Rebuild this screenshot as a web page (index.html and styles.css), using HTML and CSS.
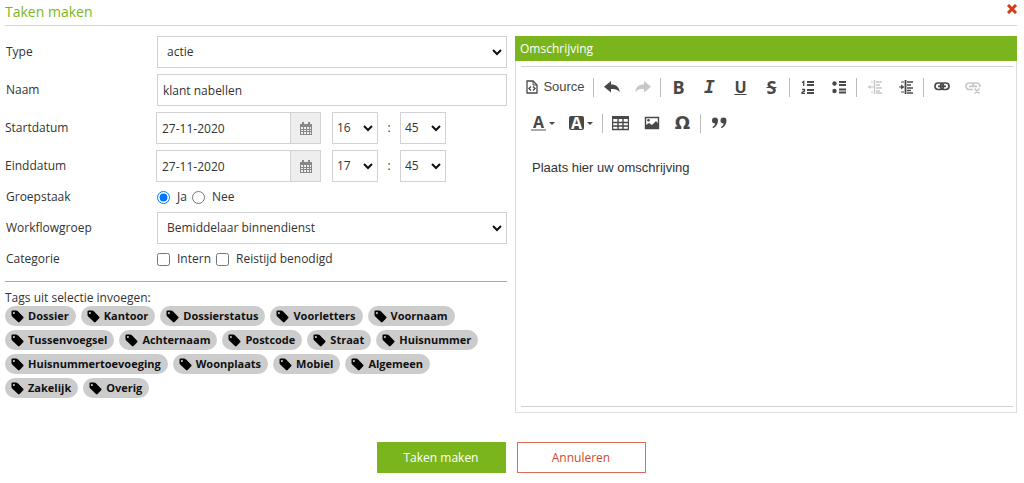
FILE: index.html
```html
<!DOCTYPE html>
<html lang="nl">
  <head>
    <meta charset="UTF-8">
    <meta
      name="viewport"
      content="width=device-width, initial-scale=1.0"
    >
    <title>Taken maken</title>

    <link rel="stylesheet" href="styles.css">
  </head>
<body>
  <header>
    <h1>Taken maken</h1>
    <button type="button" class="close" aria-label="Sluiten">
      <svg width="10" height="10" viewBox="0 0 10 10"><path d="M2 2L8 8M8 2L2 8" stroke="#d23c14" stroke-width="3" stroke-linecap="square"/></svg>
    </button>
  </header>

  <form action="#" method="post">
    <div class="columns">
      <section class="fields">
        <div class="row">
          <label for="type">Type</label>
          <select id="type" class="wide"><option>actie</option></select>
        </div>
        <div class="row">
          <label for="naam">Naam</label>
          <input id="naam" class="wide" type="text" value="klant nabellen">
        </div>
        <div class="row date-row">
          <label for="start">Startdatum</label>
          <div class="moment">
            <input id="start" class="date" type="text" value="27-11-2020">
            <button type="button" class="calendar" aria-label="Kies startdatum">
              <svg width="12" height="13" viewBox="0 0 12 13"><path d="M0 2h12v11H0z" fill="#888"/><path d="M1 5h2v2H1zM4 5h2v2H4zM7 5h2v2H7zM10 5h1v2h-1zM1 8h2v1H1zM4 8h2v1H4zM7 8h2v1H7zM10 8h1v1h-1zM1 10h2v2H1zM4 10h2v2H4zM7 10h2v2H7zM10 10h1v2h-1z" fill="#eee"/><path d="M3 0v4M9 0v4" stroke="#888" stroke-width="2"/></svg>
            </button>
            <select class="time" aria-label="Startuur"><option>16</option></select>
            <span class="colon">:</span>
            <select class="time" aria-label="Startminuut"><option>45</option></select>
          </div>
        </div>
        <div class="row date-row">
          <label for="eind">Einddatum</label>
          <div class="moment">
            <input id="eind" class="date" type="text" value="27-11-2020">
            <button type="button" class="calendar" aria-label="Kies einddatum">
              <svg width="12" height="13" viewBox="0 0 12 13"><path d="M0 2h12v11H0z" fill="#888"/><path d="M1 5h2v2H1zM4 5h2v2H4zM7 5h2v2H7zM10 5h1v2h-1zM1 8h2v1H1zM4 8h2v1H4zM7 8h2v1H7zM10 8h1v1h-1zM1 10h2v2H1zM4 10h2v2H4zM7 10h2v2H7zM10 10h1v2h-1z" fill="#eee"/><path d="M3 0v4M9 0v4" stroke="#888" stroke-width="2"/></svg>
            </button>
            <select class="time" aria-label="Einduur"><option>17</option></select>
            <span class="colon">:</span>
            <select class="time" aria-label="Eindminuut"><option>45</option></select>
          </div>
        </div>
        <div class="row choice-row" role="radiogroup" aria-labelledby="groepstaak">
          <span id="groepstaak">Groepstaak</span>
          <div class="choices">
            <label><input type="radio" name="groepstaak" checked>Ja</label>
            <label><input type="radio" name="groepstaak">Nee</label>
          </div>
        </div>
        <div class="row">
          <label for="workflow">Workflowgroep</label>
          <select id="workflow" class="wide"><option>Bemiddelaar binnendienst</option></select>
        </div>
        <div class="row choice-row" role="group" aria-labelledby="categorie">
          <span id="categorie">Categorie</span>
          <div class="choices">
            <label><input type="checkbox" name="intern">Intern</label>
            <label><input type="checkbox" name="reistijd">Reistijd benodigd</label>
          </div>
        </div>

        <hr>

        <p>Tags uit selectie invoegen:</p>
        <div class="tags">
          <button type="button"><svg><use href="#tag"/></svg>Dossier</button>
          <button type="button"><svg><use href="#tag"/></svg>Kantoor</button>
          <button type="button"><svg><use href="#tag"/></svg>Dossierstatus</button>
          <button type="button"><svg><use href="#tag"/></svg>Voorletters</button>
          <button type="button"><svg><use href="#tag"/></svg>Voornaam</button>
          <button type="button"><svg><use href="#tag"/></svg>Tussenvoegsel</button>
          <button type="button"><svg><use href="#tag"/></svg>Achternaam</button>
          <button type="button"><svg><use href="#tag"/></svg>Postcode</button>
          <button type="button"><svg><use href="#tag"/></svg>Straat</button>
          <button type="button"><svg><use href="#tag"/></svg>Huisnummer</button>
          <button type="button"><svg><use href="#tag"/></svg>Huisnummertoevoeging</button>
          <button type="button"><svg><use href="#tag"/></svg>Woonplaats</button>
          <button type="button"><svg><use href="#tag"/></svg>Mobiel</button>
          <button type="button"><svg><use href="#tag"/></svg>Algemeen</button>
          <button type="button"><svg><use href="#tag"/></svg>Zakelijk</button>
          <button type="button"><svg><use href="#tag"/></svg>Overig</button>
        </div>
      </section>

      <section class="panel">
        <h2><label for="omschrijving">Omschrijving</label></h2>
        <div class="editor">
          <div class="toolbar">
            <div class="tools">
              <button type="button" class="source">
                <svg width="12" height="14" viewBox="0 0 12 14" fill="none" stroke="#484848"><path d="M1 1h6l4 4v8H1z" stroke-width="1.3"/><path d="M7 1v4h4" stroke-width="1"/><path d="M5 6.500L3 8.500l2 2M7 6.500l2 2-2 2" stroke-width="1.400"/></svg>
                Source
              </button>
              <i class="separator"></i>
              <button type="button" aria-label="Undo"><svg width="16" height="16" viewBox="0 0 16 16"><path d="M7 2v3.500c5.500 0 8 2.500 8.800 7.500C13.500 10.500 11 10 7 10v3.500L0 7.700z" fill="#484848"/></svg></button>
              <button type="button" aria-label="Redo" disabled><svg width="16" height="16" viewBox="0 0 16 16"><path d="M9 2v3.500C3.500 5.500 1 8 .2 13 2.500 10.500 5 10 9 10v3.500l7-5.800z" fill="#484848"/></svg></button>
              <i class="separator"></i>
              <button type="button" class="bold">B</button>
              <button type="button" class="italic">I</button>
              <button type="button" class="underline">U</button>
              <button type="button" class="strike">S</button>
              <i class="separator"></i>
              <button type="button" aria-label="Numbered list"><svg width="16" height="16" viewBox="0 0 16 16" fill="none" stroke="#484848"><path d="M7 3h7M7 6h7M7 11h7M7 14h7" stroke-width="1.800"/><path d="M2 3.500L3.700 2.500V7M2 10.500h2.500v1.700L2 13.500V14.300h3" stroke-width="1.300"/></svg></button>
              <button type="button" aria-label="Bulleted list"><svg width="16" height="16" viewBox="0 0 16 16"><circle cx="3.500" cy="4.500" r="2.200" fill="#484848"/><circle cx="3.500" cy="12" r="2.200" fill="#484848"/><path d="M8 3h7M8 6h7M8 10.500h7M8 13.500h7" stroke="#484848" stroke-width="1.800"/></svg></button>
              <i class="separator"></i>
              <button type="button" aria-label="Decrease indent" disabled><svg width="16" height="16" viewBox="0 0 16 16" stroke="#484848"><path d="M7.500 1v14" stroke-width="1.500"/><path d="M9 3h6M9 6h4M9 9h6M9 12h4M9 14h6" stroke-width="1.300"/><path d="M3 8h4M4 3h2M4 13h2"/><path d="M0.500 8L3.500 6v4z" fill="#484848" stroke="none"/></svg></button>
              <button type="button" aria-label="Increase indent"><svg width="16" height="16" viewBox="0 0 16 16" stroke="#484848"><path d="M7.500 1v14" stroke-width="1.800"/><path d="M9 3h6M9 6h4M9 9h6M9 11.500h4M9 14h6" stroke-width="1.500"/><path d="M1 8h4M3 3h3M3 13h3"/><path d="M6.500 8L3 5.500v5z" fill="#484848" stroke="none"/></svg></button>
              <i class="separator"></i>
              <button type="button" aria-label="Link"><svg width="16" height="16" viewBox="0 0 16 16" fill="none" stroke="#484848"><rect x="1" y="4" width="8.500" height="6.500" rx="3.200" stroke-width="1.700"/><rect x="6.500" y="4" width="8.500" height="6.500" rx="3.200" stroke-width="1.700"/><path d="M4 7.300h8" stroke-width="1.700"/></svg></button>
              <button type="button" aria-label="Unlink" disabled><svg width="16" height="16" viewBox="0 0 16 16" fill="none" stroke="#484848" stroke-width="1.700"><path d="M8 10.500H4.200a3.200 3.200 0 0 1 0-6.500h7.600a3.200 3.200 0 0 1 3 4M8 4.500v3M4 7.300h8M9.500 9.500l5 5M14.500 9.500l-5 5"/></svg></button>
            </div>
            <div class="tools">
              <button type="button" class="color" aria-label="Text color"><span class="ink">A</span><i class="arrow"></i></button>
              <button type="button" class="color" aria-label="Background color"><span class="fill">A</span><i class="arrow"></i></button>
              <i class="separator"></i>
              <button type="button" aria-label="Table"><svg width="17" height="16" viewBox="0 0 17 16"><path d="M0 1h17v3H0z" fill="#484848"/><path d="M.5 4v10.500h16V4M.5 7.500h16M.5 11h16M6 4v10.500M11 4v10.500" fill="none" stroke="#484848" stroke-width="1.400"/></svg></button>
              <button type="button" aria-label="Image"><svg width="16" height="16" viewBox="0 0 16 16"><path d="M1.500 2.500h13v11h-13z" fill="none" stroke="#484848" stroke-width="1.400"/><path d="M2 13v-3l3-2 3 2 4-4 2.500 3v4z" fill="#484848"/><circle cx="4.500" cy="5.300" r="1.300" fill="#484848"/></svg></button>
              <button type="button" class="omega">Ω</button>
              <i class="separator"></i>
              <button type="button" aria-label="Block quote"><svg width="16" height="16" viewBox="0 0 16 16"><path d="M1 5.500a3 3 0 1 1 6 0C7 9 5 12 2 13.200L1.500 12C3 11 4 10 4.200 8.500A3 3 0 0 1 1 5.500zM9.500 5.500a3 3 0 1 1 6 0c0 3.500-2 6.500-5 7.700L10 12c1.500-1 2.500-2 2.700-3.500a3 3 0 0 1-3.200-3z" fill="#484848"/></svg></button>
            </div>
          </div>
          <textarea id="omschrijving">Plaats hier uw omschrijving</textarea>
        </div>
      </section>
    </div>

    <div class="actions">
      <button type="submit" class="submit">Taken maken</button>
      <button type="button" class="cancel">Annuleren</button>
    </div>
  </form>

  <svg class="symbols">
    <symbol id="tag" viewBox="0 0 13 13">
      <path fill-rule="evenodd" d="M1.500.5H5.200Q6 .5 6.600 1.100L12.200 6.700Q13 7.500 12.200 8.300L8.600 12.100Q7.800 12.900 7 12.100L1.200 6.400Q.5 5.700.5 5V1.500Q.5.500 1.500.500zM2.900 1.900a1 1 0 1 0 .01 0z"/>
    </symbol>
  </svg>
</body>
</html>
```
FILE: styles.css
```css
* {
  box-sizing: border-box;
}
body {
  margin: 0;
  padding: 0 7px 0 5px;
  background-color: #fff;
  color: #333;
  font: 12px/16px "Open Sans", sans-serif;
}
header {
  display: flex;
  justify-content: space-between;
  align-items: flex-start;
  height: 26px;
  border-bottom: 1px solid #d6d6d6;
}
h1 {
  margin: 2px 0 0;
  color: #7ab51d;
  font-size: 14px;
  font-weight: 400;
  line-height: 20px;
}
button,
input,
select,
textarea {
  margin: 0;
  color: inherit;
  font: inherit;
}
button {
  padding: 0;
  border: 0;
  background: none;
}
svg {
  display: block;
}
.symbols {
  display: none;
}
.close {
  margin-top: 4px;
}
.columns {
  display: grid;
  grid-template-columns: 1fr 1fr;
  gap: 8px;
  padding-top: 10px;
}
.fields {
  display: flex;
  flex-direction: column;
  gap: 6px;
}
.row {
  display: grid;
  grid-template-columns: 151px 1fr;
  align-items: center;
  min-height: 32px;
  padding-left: 1px;
}
.date-row {
  padding-left: 0;
}
.choice-row {
  min-height: 18px;
}
.wide,
.date,
.time {
  height: 32px;
  border: 1px solid #d2d2d2;
  border-radius: 0;
  background-color: #fff;
}
.wide {
  width: 100%;
  padding: 0 5px;
}
select {
  appearance: none;
  background-image: url("data:image/svg+xml,%3Csvg xmlns='http://www.w3.org/2000/svg' width='10' height='7'%3E%3Cpath d='M1 1l4 4 4-4' fill='none' stroke='%23111' stroke-width='2'/%3E%3C/svg%3E");
  background-position: right 4px center;
  background-repeat: no-repeat;
}
select.wide {
  padding: 0 20px 0 9px;
}
.moment {
  display: flex;
  align-items: center;
}
.date {
  width: 135px;
  padding: 0 5px;
}
.calendar {
  display: flex;
  justify-content: center;
  align-items: center;
  width: 30px;
  height: 32px;
  margin-right: 11px;
  border: 1px solid #d2d2d2;
  border-left: 0;
  background-color: #eee;
}
.time {
  width: 46px;
  padding: 0 4px;
}
.colon {
  width: 22px;
  text-align: center;
}
.choices,
.choices label {
  display: flex;
  align-items: center;
  gap: 7px;
}
.choices {
  gap: 5px;
}
.choices input {
  width: 13px;
  height: 13px;
  margin: 0;
}
hr {
  width: 100%;
  margin: 7px 0 5px;
  border: 0;
  border-top: 1px solid #aaa;
}
p {
  margin: -3px 0 -6px;
}
.tags {
  display: flex;
  flex-wrap: wrap;
  gap: 4px 5px;
}
.tags button {
  display: flex;
  align-items: center;
  gap: 4px;
  height: 20px;
  padding: 0 7px 0 6px;
  border-radius: 10px;
  background-color: #ccc;
  color: #111;
  font-size: 11px;
  font-weight: 700;
}
.tags svg {
  width: 13px;
  height: 13px;
}

.panel {
  display: flex;
  flex-direction: column;
  min-height: 377px;
  border: 1px solid #ddd;
  border-top: 0;
}
h2 {
  margin: 0 -1px;
  padding: 5px 5px 4px;
  background-color: #7ab51d;
  color: #fff;
  font-size: 12px;
  font-weight: 400;
}
.editor {
  flex: 1;
  display: flex;
  flex-direction: column;
  margin: 5px 3px 5px 5px;
  border: 1px solid #d1d1d1;
  border-width: 1px 0;
}
.toolbar {
  display: flex;
  flex-direction: column;
  gap: 8px;
  padding: 6px 3px;
}
.tools {
  display: flex;
  align-items: center;
}
.tools button {
  display: flex;
  justify-content: center;
  align-items: center;
  width: 31px;
  height: 28px;
  color: #484848;
  font: 700 18px/18px "Open Sans", sans-serif;
}
.tools button:disabled {
  opacity: 0.3;
}
.tools .source {
  gap: 5px;
  width: 67px;
  padding-right: 4px;
  font: 13px/18px "Liberation Sans", sans-serif;
}
.separator {
  width: 1px;
  height: 19px;
  margin: 0 2px;
  background-color: #bbb;
}
.tools .italic {
  font-family: "DejaVu Sans Mono", monospace;
  font-style: italic;
}
.tools .underline {
  font-size: 16px;
  text-decoration: underline;
}
.tools .strike {
  text-decoration: line-through;
}
.tools .omega {
  font-family: "DejaVu Sans", sans-serif;
}
.tools .color {
  gap: 3px;
  width: 38px;
  font-size: 16px;
  line-height: 14px;
}
.ink {
  width: 15px;
  border-bottom: 2px solid #aaa;
}
.fill {
  width: 15px;
  border-radius: 2px;
  background-color: #484848;
  color: #fff;
}
.arrow {
  border: 3px solid transparent;
  border-top-color: #484848;
  border-bottom: 0;
}
textarea {
  flex: 1;
  width: 100%;
  padding: 15px 11px;
  border: 0;
  outline: 0;
  resize: none;
  font: 13px/20px "Liberation Sans", sans-serif;
}

.actions {
  display: flex;
  justify-content: center;
  gap: 11px;
  margin-top: 29px;
}
.actions button {
  width: 129px;
  height: 31px;
}
.actions .submit {
  background-color: #7ab51d;
  color: #fff;
}
.actions .cancel {
  border: 1px solid #dc6b57;
  color: #d04a32;
}
```
